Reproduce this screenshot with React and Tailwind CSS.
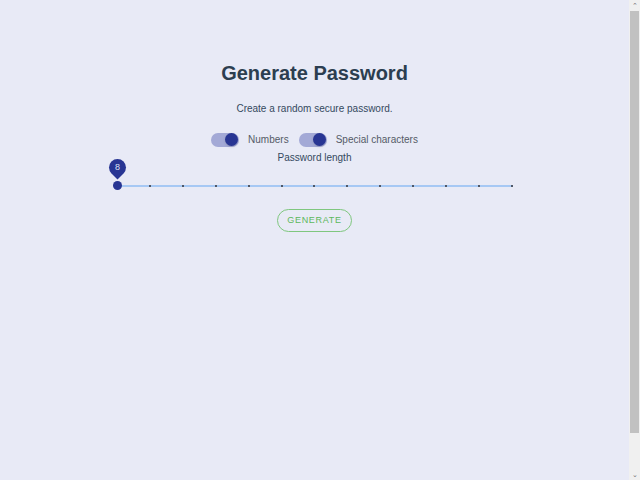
import React from 'react';

const Toggle = ({ label }) => (
  <label className="flex items-center gap-[9px]">
    <span className="relative w-[28px] h-[14px] rounded-full bg-[#a3a9d6] flex items-center">
      <span className="absolute left-[14px] w-[13px] h-[13px] rounded-full bg-[#283593] shadow-sm" />
    </span>
    <span className="text-[10px] text-[#555b66]">{label}</span>
  </label>
);

const Scrollbar = () => (
  <div className="w-[11px] h-full bg-[#f0f0f0] flex flex-col items-center">
    <span className="h-[11px] text-[7px] leading-[11px] text-[#707070]">&#8963;</span>
    <div className="w-[9px] h-[422px] bg-[#c1c1c1]" />
    <div className="flex-1" />
    <span className="h-[11px] text-[7px] leading-[11px] text-[#707070]">&#8964;</span>
  </div>
);

export default function App() {
  const marks = Array.from({ length: 13 }, (_, i) => i);

  return (
    <div className="h-screen overflow-hidden bg-[#e8eaf6] flex" style={{ fontFamily: '"Liberation Sans", Arial, sans-serif' }}>
      <div className="flex-1 flex flex-col items-center pt-[60px]">
        <h1 className="text-[20px] font-bold text-[#2c3e50] leading-[26px]">Generate Password</h1>
        <p className="mt-[16px] text-[10px] text-[#34495e] leading-[14px]">Create a random secure password.</p>

        <div className="mt-[16px] flex items-center gap-[10px]">
          <Toggle label="Numbers" />
          <Toggle label="Special characters" />
        </div>

        <p className="mt-[4px] text-[10px] text-[#34495e] leading-[14px]">Password length</p>

        {/* slider */}
        <div className="relative w-[395px] h-[20px] mt-[7px] flex items-center">
          <div className="absolute left-0 right-0 top-[13px] h-[2px] bg-[#a6c8f4]" />
          <div className="absolute left-[-1px] right-[-1px] top-[13px] flex justify-between">
            {marks.map(i => (
              <span key={i} className="w-[2px] h-[2px] bg-[#4f5868] first:opacity-0" />
            ))}
          </div>
          <span className="absolute left-[-4px] top-[9px] w-[9px] h-[9px] rounded-full bg-[#283593]" />
          <span className="absolute left-[-8px] top-[-13px] w-[17px] h-[17px] rounded-[50%_50%_50%_0] -rotate-45 bg-[#283593] flex items-center justify-center">
            <span className="rotate-45 text-[9px] text-[#dde0f5] leading-none">8</span>
          </span>
        </div>

        <button className="mt-[17px] h-[23px] w-[75px] rounded-full border border-[#7fc77f] text-[#5cb85c] text-[9px] tracking-[0.08em] leading-none">
          GENERATE
        </button>
      </div>
      <Scrollbar />
    </div>
  );
}
